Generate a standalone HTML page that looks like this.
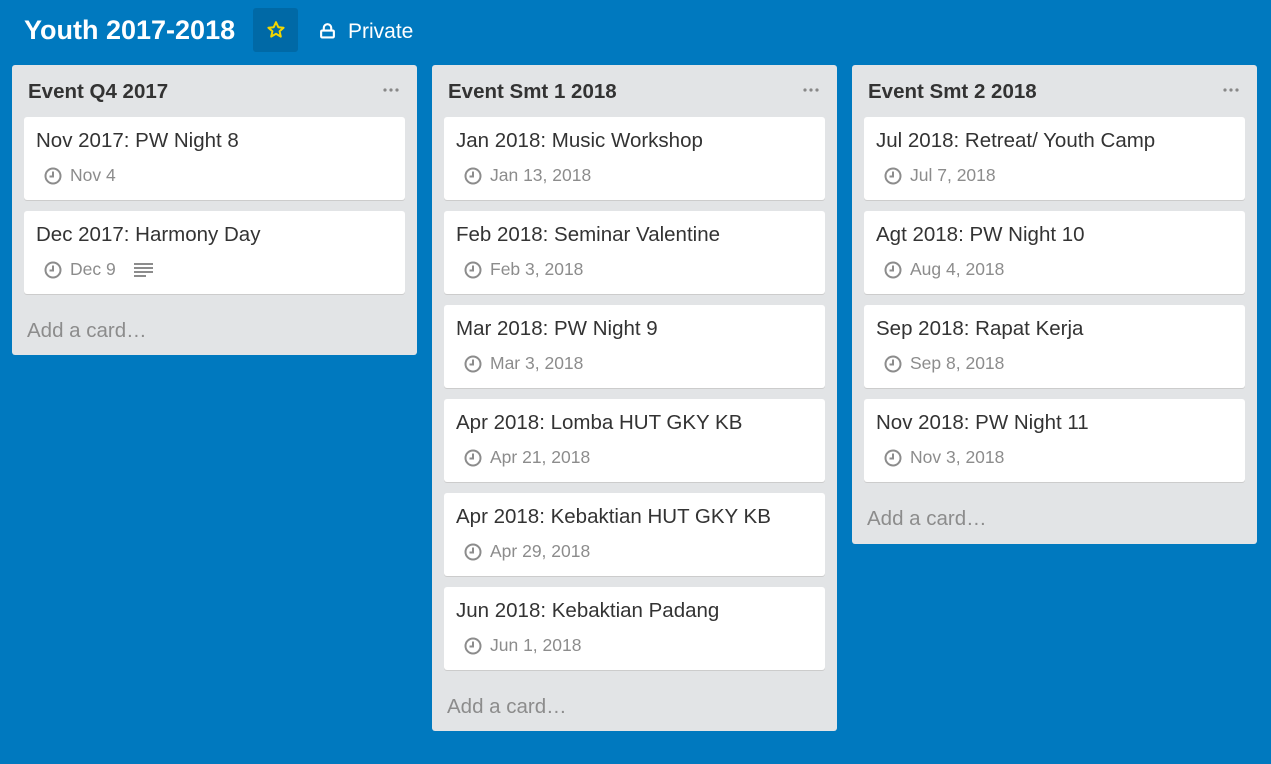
<!DOCTYPE html>
<html><head><meta charset="utf-8"><style>
*{box-sizing:border-box;margin:0;padding:0}
body{width:1271px;height:764px;background:#0079bf;font-family:"Liberation Sans",Arial,sans-serif;position:relative;overflow:hidden}
.title{position:absolute;left:24px;top:15px;color:#fff;font-size:27px;font-weight:bold}
.star{position:absolute;left:253px;top:8px;width:45px;height:44px;background:rgba(0,0,0,0.13);border-radius:3px}
.star svg{position:absolute;left:13px;top:12px}
.priv{position:absolute;left:319px;top:20px;color:#fff;font-size:21px}
.priv svg{vertical-align:-1px;margin-right:12px}
.list{position:absolute;top:65px;width:405px;background:#e2e4e6;border-radius:3px}
.lh{height:52px;padding:15px 16px;font-weight:bold;font-size:20.5px;color:#333;position:relative}
.dots{position:absolute;right:18px;top:23px}
.card{margin:0 12px 11px;background:#fff;border-radius:3px;height:83px;box-shadow:0 1px 0 #ccc;padding:12px 12px;color:#333}
.ct{font-size:20.5px;height:25px}
.cd{margin-top:11px;margin-left:8px;font-size:17.5px;color:#8c8c8c;display:flex;align-items:center}
.cd svg{margin-right:8px}
.add{height:49px;padding:14px 15px;font-size:20.5px;color:#8c8c8c}
</style></head><body>
<div class="title">Youth 2017-2018</div>
<div class="star"><svg width="20" height="20" viewBox="0 0 20 20"><path d="M10 2.2l2.3 5 5.3.5-4 3.6 1.2 5.3L10 13.8l-4.8 2.8 1.2-5.3-4-3.6 5.3-.5z" fill="none" stroke="#f2d600" stroke-width="2" stroke-linejoin="round"/></svg></div>
<div class="priv"><svg width="17" height="17" viewBox="0 0 16 16"><path d="M4.5 8V5.5a3.5 3.5 0 0 1 7 0V8" fill="none" stroke="#fff" stroke-width="2"/><rect x="2" y="8" width="12" height="6.5" rx="1" fill="none" stroke="#fff" stroke-width="2"/></svg>Private</div>

<svg width="0" height="0" style="position:absolute"><defs><symbol id="clk" viewBox="0 0 18 18"><circle cx="9" cy="9" r="7.5" fill="none" stroke="#8c8c8c" stroke-width="2"/><path d="M9 4.5V9.5H5.5" fill="none" stroke="#8c8c8c" stroke-width="2"/></symbol><symbol id="dt" viewBox="0 0 16 4"><circle cx="2" cy="2" r="1.6" fill="#888"/><circle cx="8" cy="2" r="1.6" fill="#888"/><circle cx="14" cy="2" r="1.6" fill="#888"/></symbol></defs></svg>

<div class="list" style="left:12px;height:290px">
<div class="lh">Event Q4 2017<svg class="dots" width="16" height="4"><use href="#dt"/></svg></div>
<div class="card"><div class="ct">Nov 2017: PW Night 8</div><div class="cd"><svg width="18" height="18"><use href="#clk"/></svg>Nov 4</div></div>
<div class="card"><div class="ct">Dec 2017: Harmony Day</div><div class="cd"><svg width="18" height="18"><use href="#clk"/></svg>Dec 9<svg width="20" height="16" style="margin-left:18px" viewBox="0 0 20 16"><path d="M0 2h19M0 6h19M0 10h19M0 14h12" stroke="#8c8c8c" stroke-width="2"/></svg></div></div>
<div class="add">Add a card…</div>
</div>

<div class="list" style="left:432px;height:666px">
<div class="lh">Event Smt 1 2018<svg class="dots" width="16" height="4"><use href="#dt"/></svg></div>
<div class="card"><div class="ct">Jan 2018: Music Workshop</div><div class="cd"><svg width="18" height="18"><use href="#clk"/></svg>Jan 13, 2018</div></div>
<div class="card"><div class="ct">Feb 2018: Seminar Valentine</div><div class="cd"><svg width="18" height="18"><use href="#clk"/></svg>Feb 3, 2018</div></div>
<div class="card"><div class="ct">Mar 2018: PW Night 9</div><div class="cd"><svg width="18" height="18"><use href="#clk"/></svg>Mar 3, 2018</div></div>
<div class="card"><div class="ct">Apr 2018: Lomba HUT GKY KB</div><div class="cd"><svg width="18" height="18"><use href="#clk"/></svg>Apr 21, 2018</div></div>
<div class="card"><div class="ct">Apr 2018: Kebaktian HUT GKY KB</div><div class="cd"><svg width="18" height="18"><use href="#clk"/></svg>Apr 29, 2018</div></div>
<div class="card"><div class="ct">Jun 2018: Kebaktian Padang</div><div class="cd"><svg width="18" height="18"><use href="#clk"/></svg>Jun 1, 2018</div></div>
<div class="add">Add a card…</div>
</div>

<div class="list" style="left:852px;height:479px">
<div class="lh">Event Smt 2 2018<svg class="dots" width="16" height="4"><use href="#dt"/></svg></div>
<div class="card"><div class="ct">Jul 2018: Retreat/ Youth Camp</div><div class="cd"><svg width="18" height="18"><use href="#clk"/></svg>Jul 7, 2018</div></div>
<div class="card"><div class="ct">Agt 2018: PW Night 10</div><div class="cd"><svg width="18" height="18"><use href="#clk"/></svg>Aug 4, 2018</div></div>
<div class="card"><div class="ct">Sep 2018: Rapat Kerja</div><div class="cd"><svg width="18" height="18"><use href="#clk"/></svg>Sep 8, 2018</div></div>
<div class="card"><div class="ct">Nov 2018: PW Night 11</div><div class="cd"><svg width="18" height="18"><use href="#clk"/></svg>Nov 3, 2018</div></div>
<div class="add">Add a card…</div>
</div>
</body></html>
